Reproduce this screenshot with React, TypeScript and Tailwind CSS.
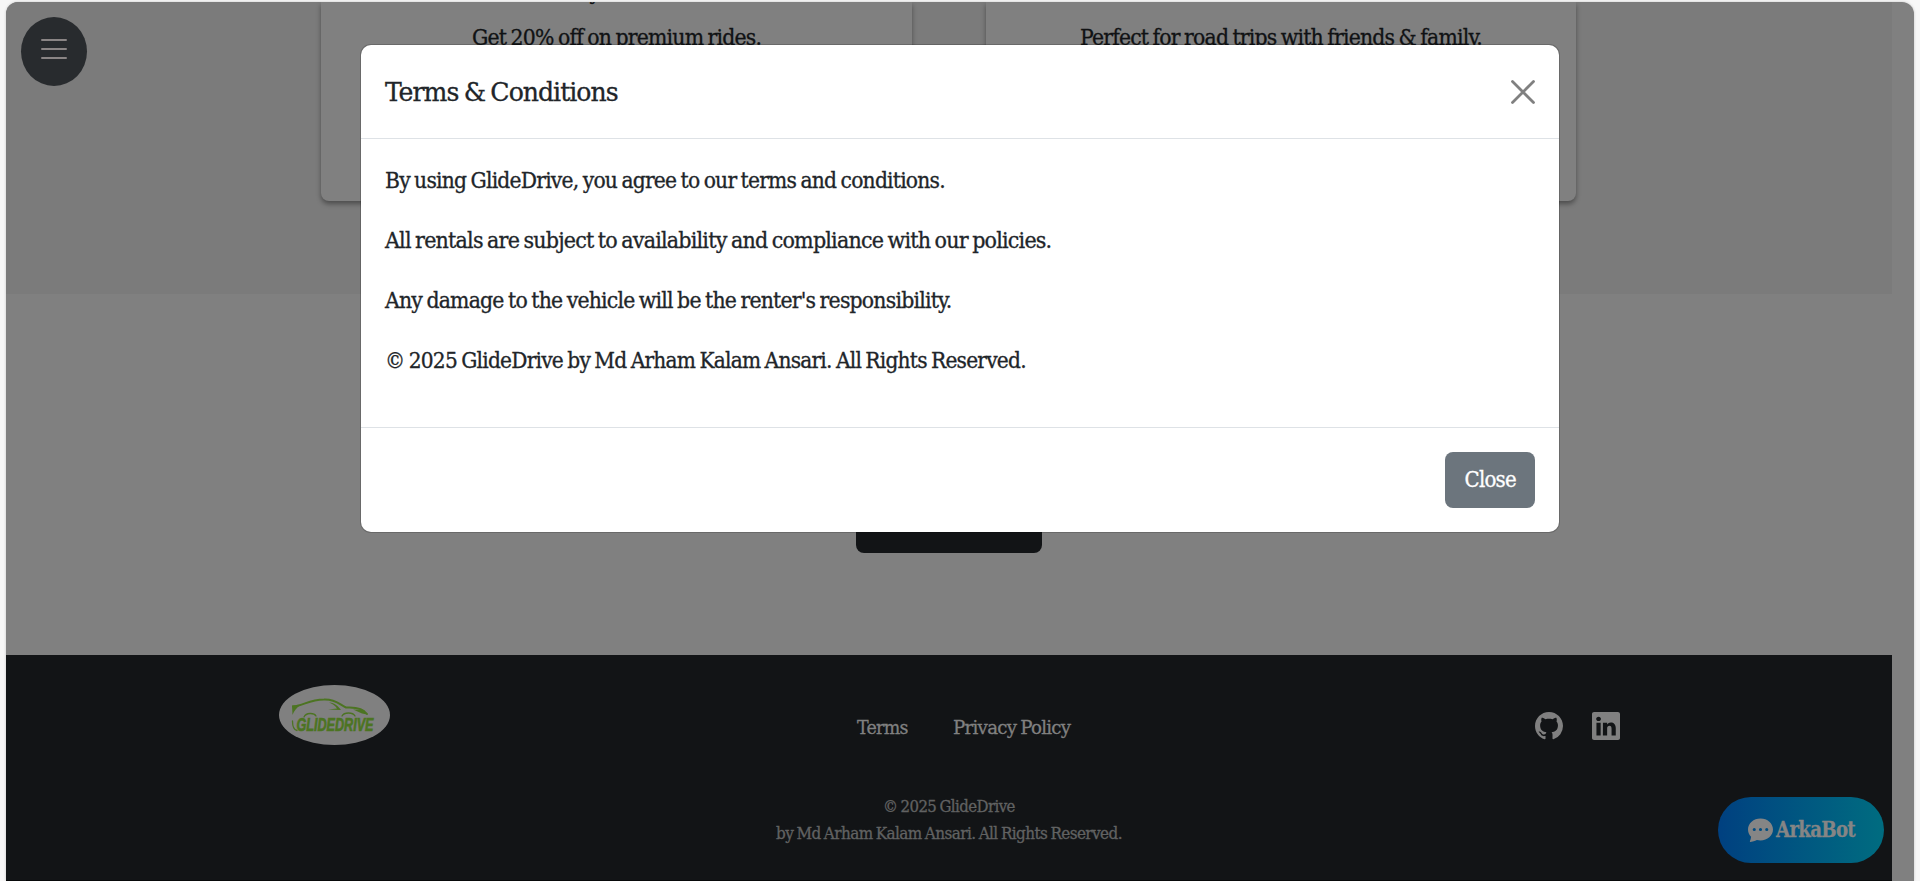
import { useLayoutEffect, useRef, type ReactNode } from "react";
import { BsGithub, BsLinkedin, BsChatDotsFill } from "react-icons/bs";

/* Condenses a line of slab-serif text so that it fills the width of its box. */
function Line({ className, children }: { className: string; children: ReactNode }) {
  const ref = useRef<HTMLSpanElement>(null);
  useLayoutEffect(() => {
    const el = ref.current;
    if (!el || !el.parentElement) return;
    el.style.transform = `scaleX(${el.parentElement.clientWidth / el.offsetWidth})`;
  }, []);
  return (
    <span className={"block shrink-0 whitespace-nowrap " + className}>
      <span ref={ref} className="inline-block origin-left tracking-[-0.035em] [word-spacing:-0.06em] [-webkit-text-stroke:0.3px_currentColor]">
        {children}
      </span>
    </span>
  );
}

function Logo() {
  return (
    <svg viewBox="0 0 111 60" className="h-[60px] w-[111px] overflow-visible">
      <ellipse cx="55.5" cy="30" rx="55.5" ry="30" fill="#808080" />
      <g fill="none" stroke="#4c7422" strokeLinecap="round" strokeLinejoin="round">
        <path d="M14 21.500C25 20.500 30 14.500 45 14.500C57 14 61 20 67 22.500C75 22 84 23 88 29" strokeWidth="2" />
        <path d="M25 32C27 27.500 35 27.500 37 31M63 31C65 27 74 27 76 31" strokeWidth="1.300" />
        <path d="M13.500 36C13.500 41 15 45 18 45.500" strokeWidth="1.300" />
      </g>
      <path d="M13 20.500L22 20C18 22 15 26 13.500 30Z" fill="#4c7422" />
      <path d="M50 17.500C56 18 59 21 62 25L49 24.500L58 23.500C56 20.500 54 19 50 17.500Z" fill="#4c7422" />
      <path d="M74 24.500L85 25L88 29.500L83 28.500Z" fill="#4c7422" />
      <text x="17.5" y="45.500" textLength="77" lengthAdjust="spacingAndGlyphs" fill="#4c7422" stroke="#4c7422" strokeWidth=".7" className="font-['Liberation_Sans'] text-[18.500px] font-bold italic">
        GLIDEDRIVE
      </text>
    </svg>
  );
}

export default function App() {
  return (
    <div className="relative h-[881px] w-full overflow-hidden bg-[#f7f7f7] pt-[2px] pr-[6px] pl-[6px] font-['DejaVu_Serif_Condensed','DejaVu_Serif',serif] text-[#212529]">
      <div className="h-[879px] overflow-hidden rounded-t-[12px] bg-[#808080] shadow-[0_0_3px_rgba(0,0,0,0.2)]">
        <div className="flex h-full w-[1886px] flex-col">
          <section className="flex h-[292px] shrink-0 bg-[#7b7b7b]">
            <div className="w-[315px] shrink-0 pt-[15px] pl-[15px]">
              <button className="flex h-[69px] w-[66px] flex-col items-center rounded-[50%] bg-[#282b2e] pt-[22px]">
                <span className="h-[2px] w-[26px] rounded bg-[#8a8585]" />
                <span className="mt-[7px] h-[2px] w-[26px] rounded bg-[#8a8585]" />
                <span className="mt-[7px] h-[2px] w-[26px] rounded bg-[#8a8585]" />
              </button>
            </div>
            <div className="flex h-[199px] gap-[74px]">
              <article className="flex w-[591px] flex-col items-center rounded-b-[8px] bg-[#808080] text-[#101214] shadow-[0_3px_5px_rgba(0,0,0,0.38)]">
                <Line className="mt-[-26px] mr-[44px] w-[10px] text-[22px] leading-[32px]">y</Line>
                <Line className="mt-[14px] w-[289px] text-[22px] leading-[32px]">Get 20% off on premium rides.</Line>
              </article>
              <article className="flex w-[590px] flex-col items-center rounded-b-[8px] bg-[#808080] pt-[20px] text-[#101214] shadow-[0_3px_5px_rgba(0,0,0,0.38)]">
                <Line className="w-[402px] text-[22px] leading-[32px]">Perfect for road trips with friends &amp; family.</Line>
              </article>
            </div>
          </section>
          <section className="flex h-[361px] shrink-0 flex-col items-center pt-[201px]">
            <div className="h-[58px] w-[186px] rounded-[8px] bg-[#121416]" />
          </section>
          <footer className="h-[226px] border-b border-[#08090a] bg-[#121416] text-[#808080]">
            <div className="flex h-[90px]">
              <div className="w-[851px] shrink-0 pt-[30px] pl-[273px]">
                <Logo />
              </div>
              <nav className="flex w-[678px] shrink-0 gap-[45px] pt-[57px]">
                <Line className="w-[51px] text-[19px] leading-[30px]">Terms</Line>
                <Line className="w-[117px] text-[19px] leading-[30px]">Privacy Policy</Line>
              </nav>
              <div className="flex gap-[29px] pt-[57px]">
                <BsGithub className="size-[28px]" />
                <BsLinkedin className="size-[28px]" />
              </div>
            </div>
            <div className="flex flex-col items-center pt-[48px] text-[#616262]">
              <Line className="w-[132px] text-[16.500px] leading-[27px]">© 2025 GlideDrive</Line>
              <Line className="w-[346px] text-[16.500px] leading-[27px]">by Md Arham Kalam Ansari. All Rights Reserved.</Line>
            </div>
          </footer>
        </div>
      </div>

      <button className="absolute top-[797px] left-[1718px] flex h-[66px] w-[166px] items-center gap-[3px] rounded-full bg-linear-to-r from-[#004080] to-[#006c80] pb-[2px] pl-[30px] text-[#858585]">
        <BsChatDotsFill className="size-[25px]" />
        <Line className="w-[79px] text-[22px] leading-[30px] font-bold">ArkaBot</Line>
      </button>

      <div role="dialog" className="absolute top-[45px] left-[361px] flex h-[487px] w-[1198px] flex-col rounded-[10px] bg-white shadow-[0_0_0_1px_rgba(0,0,0,0.18)]">
        <header className="flex h-[94px] shrink-0 items-center justify-between border-b border-[#dee2e6] px-6">
          <Line className="w-[233px] text-[26.500px] leading-[36px]">Terms &amp; Conditions</Line>
          <svg viewBox="0 0 24 24" className="size-[24px]" stroke="#808080" strokeWidth="2.800" strokeLinecap="round">
            <path d="M1.500 1.500L22.500 22.500M22.500 1.500L1.500 22.500" />
          </svg>
        </header>
        <div className="flex grow flex-col gap-6 px-6 pt-6">
          <Line className="w-[560px] text-[22px] leading-[36px]">By using GlideDrive, you agree to our terms and conditions.</Line>
          <Line className="w-[666px] text-[22px] leading-[36px]">All rentals are subject to availability and compliance with our policies.</Line>
          <Line className="w-[567px] text-[22px] leading-[36px]">Any damage to the vehicle will be the renter's responsibility.</Line>
          <Line className="w-[641px] text-[22px] leading-[36px]">© 2025 GlideDrive by Md Arham Kalam Ansari. All Rights Reserved.</Line>
        </div>
        <div className="flex h-[105px] shrink-0 items-start justify-end border-t border-[#dee2e6] px-6 pt-6">
          <button className="flex h-[56px] w-[90px] items-center justify-center rounded-[8px] bg-[#6c757d] text-white">
            <Line className="w-[51px] text-[22px] leading-[36px]">Close</Line>
          </button>
        </div>
      </div>
    </div>
  );
}
